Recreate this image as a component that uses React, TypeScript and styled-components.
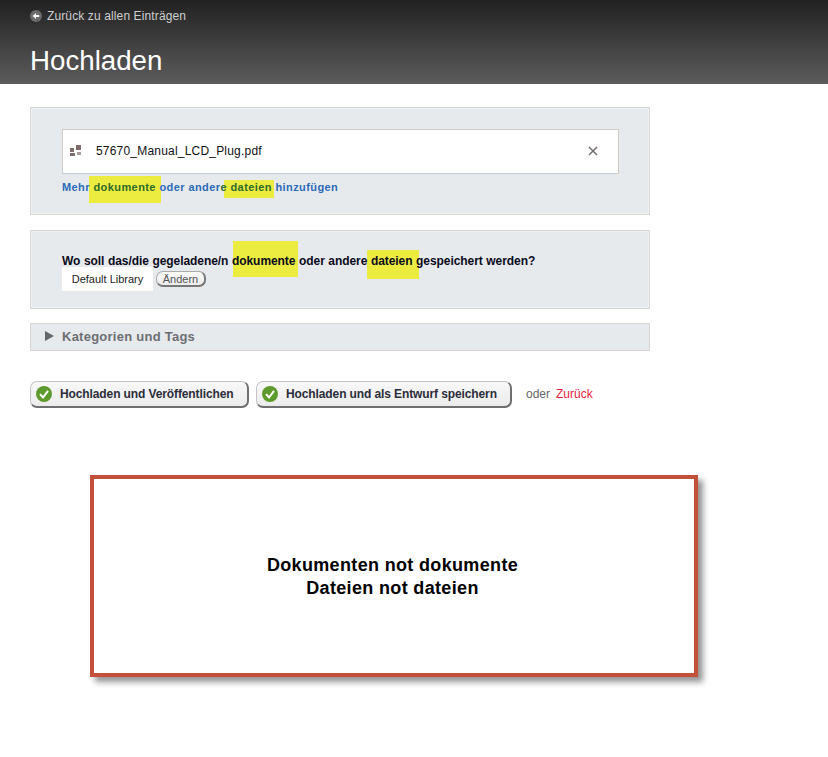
import React from 'react';
import styled, { createGlobalStyle } from 'styled-components';

const GlobalStyle = createGlobalStyle`
  html, body {
    margin: 0;
    padding: 0;
    background: #fff;
    font-family: "Liberation Sans", Arial, sans-serif;
  }
`;

const Header = styled.header`
  height: 84px;
  box-sizing: border-box;
  padding: 8px 30px 0;
  background: linear-gradient(#212121, #5c5c5c);
`;

const BackLink = styled.a`
  display: flex;
  align-items: center;
  gap: 5px;
  height: 16px;
  font-size: 12px;
  letter-spacing: 0.12px;
  color: #cfcfcf;
`;

const Title = styled.h1`
  margin: 21px 0 0;
  font-size: 27.7px;
  line-height: 32px;
  font-weight: 400;
  color: #fff;
`;

const Content = styled.main`
  padding: 23px 30px 80px;
  width: 620px;
`;

const Panel = styled.section<{ $height: number; $top?: number; $padTop: number }>`
  box-sizing: border-box;
  height: ${(p) => p.$height}px;
  margin-top: ${(p) => p.$top ?? 0}px;
  padding: ${(p) => p.$padTop}px 31px 0;
  background: #e7eaed;
  border: 1px solid #d6d6d6;
  outline: 1px solid #f2f2f2;
  outline-offset: -2px;
`;

const FileRow = styled.div`
  display: flex;
  align-items: center;
  box-sizing: border-box;
  width: 557px;
  height: 45px;
  padding: 0 20px 2px 7px;
  background: #fff;
  border: 1px solid #cbcbcb;
  font-size: 12px;
  color: #111;
`;

const FileName = styled.span`
  flex: 1;
  margin-left: 15px;
  letter-spacing: 0.2px;
`;

const MoreLink = styled.div`
  isolation: isolate;
  margin-top: 6px;
  font-size: 11px;
  line-height: 14px;
  font-weight: 700;
  letter-spacing: 0.42px;
  color: #2b6ab8;
  white-space: nowrap;
`;

const Mark = styled.span<{ $box: [number, number, number, number]; $color: string }>`
  position: relative;
  color: ${(p) => p.$color};

  &::before {
    content: '';
    position: absolute;
    z-index: -1;
    top: ${(p) => p.$box[0]}px;
    right: ${(p) => p.$box[1]}px;
    bottom: ${(p) => p.$box[2]}px;
    left: ${(p) => p.$box[3]}px;
    background: #ebec3f;
  }
`;

const Question = styled.div`
  isolation: isolate;
  height: 16px;
  font-size: 12px;
  line-height: 20px;
  font-weight: 700;
  letter-spacing: -0.06px;
  word-spacing: 0.3px;
  color: #0a0a1c;
  white-space: nowrap;
`;

const LibraryRow = styled.div`
  display: flex;
  align-items: center;
  gap: 3px;
`;

const LibraryName = styled.span`
  width: 91px;
  height: 24px;
  background: #fff;
  font-size: 11px;
  line-height: 24px;
  text-align: center;
  color: #222;
`;

const SmallButton = styled.button`
  width: 50px;
  height: 16px;
  padding: 0;
  background: linear-gradient(#fafafa, #ececec);
  border: 1px solid #aaa;
  border-right: 2px solid #777;
  border-bottom: 2px solid #777;
  border-radius: 7px;
  font: 11px/12px "Liberation Sans", Arial, sans-serif;
  color: #555;
`;

const Accordion = styled.section`
  display: flex;
  align-items: center;
  gap: 8px;
  box-sizing: border-box;
  height: 28px;
  margin-top: 14px;
  padding: 0 0 2px 14px;
  background: #e7eaed;
  border: 1px solid #d6d6d6;
  font-size: 13px;
  font-weight: 700;
  letter-spacing: 0.25px;
  color: #6d6e72;
`;

const Arrow = styled.span`
  width: 0;
  height: 0;
  border-left: 9px solid #666;
  border-top: 5px solid transparent;
  border-bottom: 5px solid transparent;
`;

const Actions = styled.div`
  display: flex;
  align-items: center;
  margin-top: 30px;
  font-size: 12px;
  white-space: nowrap;
`;

const ActionButton = styled.button<{ $width: number }>`
  display: flex;
  align-items: center;
  gap: 8px;
  box-sizing: border-box;
  width: ${(p) => p.$width}px;
  height: 27px;
  margin-right: 7px;
  padding: 0 0 0 5px;
  background: linear-gradient(#f8f8f8, #ececec);
  border: 1px solid #c4c4c4;
  border-right: 2px solid #6f6f6f;
  border-bottom: 2px solid #6f6f6f;
  border-radius: 7px;
  font: 700 12px "Liberation Sans", Arial, sans-serif;
  letter-spacing: -0.11px;
  color: #2b2d3a;
`;

const Or = styled.span`
  margin: 0 0 2px 7px;
  color: #666;
`;

const BackAction = styled.a`
  margin: 0 0 2px 6px;
  color: #e8203a;
`;

const Note = styled.aside`
  display: flex;
  flex-direction: column;
  justify-content: center;
  box-sizing: border-box;
  width: 608px;
  height: 202px;
  margin: 67px 0 0 60px;
  padding: 2px 3px 0 0;
  background: #fff;
  border: 4px solid #c2503a;
  box-shadow: 5px 5px 6px #949494;
  font-size: 18px;
  line-height: 23px;
  font-weight: 700;
  letter-spacing: 0.34px;
  text-align: center;
  color: #000;
`;

const BackIcon = () => (
  <svg width="12" height="12" viewBox="0 0 12 12">
    <circle cx="6" cy="6" r="6" fill="#6a6a6a" />
    <path d="M2.6 6 6 3v2h3.2v2H6v2z" fill="#fff" />
  </svg>
);

const FileIcon = () => (
  <svg width="11" height="11" viewBox="0 0 11 11">
    <rect x="0" y="3" width="4" height="4" fill="#7d6e6c" />
    <rect x="6" y="0" width="5" height="5" fill="#7d6e6c" />
    <rect x="0" y="8" width="5" height="3" fill="#7d6e6c" />
    <rect x="7" y="7" width="4" height="3" fill="#a89c9a" />
  </svg>
);

const CloseIcon = () => (
  <svg width="10" height="10" viewBox="0 0 10 10">
    <path d="M1 1l8 8M9 1l-8 8" stroke="#6f6767" strokeWidth="1.4" fill="none" />
  </svg>
);

const CheckIcon = () => (
  <svg width="16" height="16" viewBox="0 0 16 16">
    <circle cx="8" cy="8" r="8" fill="#5f9a2c" />
    <path d="M4 8.2 7 11.5 12 4.8" stroke="#fff" strokeWidth="2" fill="none" />
  </svg>
);

const App: React.FC = () => (
  <>
    <GlobalStyle />
    <Header>
      <BackLink>
        <BackIcon />
        Zurück zu allen Einträgen
      </BackLink>
      <Title>Hochladen</Title>
    </Header>

    <Content>
      <Panel $height={108} $padTop={21}>
        <FileRow>
          <FileIcon />
          <FileName>57670_Manual_LCD_Plug.pdf</FileName>
          <CloseIcon />
        </FileRow>
        <MoreLink>
          Mehr <Mark $box={[-5, -5, -10, -4]} $color="#2f6b2a">dokumente</Mark> oder ander
          <Mark $box={[-1, -2, -5, 4]} $color="#2f6b2a">e dateien</Mark> hinzufügen
        </MoreLink>
      </Panel>

      <Panel $height={79} $top={15} $padTop={20}>
        <Question>
          Wo soll das/die gegeladene/n <Mark $box={[-13, -3, -9, 1]} $color="#0a0a1c">dokumente</Mark> oder
          andere <Mark $box={[-4, -6, -11, -4]} $color="#0a0a1c">dateien</Mark> gespeichert werden?
        </Question>
        <LibraryRow>
          <LibraryName>Default Library</LibraryName>
          <SmallButton>Ändern</SmallButton>
        </LibraryRow>
      </Panel>

      <Accordion>
        <Arrow />
        Kategorien und Tags
      </Accordion>

      <Actions>
        <ActionButton $width={219}>
          <CheckIcon />
          Hochladen und Veröffentlichen
        </ActionButton>
        <ActionButton $width={256}>
          <CheckIcon />
          Hochladen und als Entwurf speichern
        </ActionButton>
        <Or>oder</Or>
        <BackAction>Zurück</BackAction>
      </Actions>

      <Note>
        <div>Dokumenten not dokumente</div>
        <div>Dateien not dateien</div>
      </Note>
    </Content>
  </>
);

export default App;
